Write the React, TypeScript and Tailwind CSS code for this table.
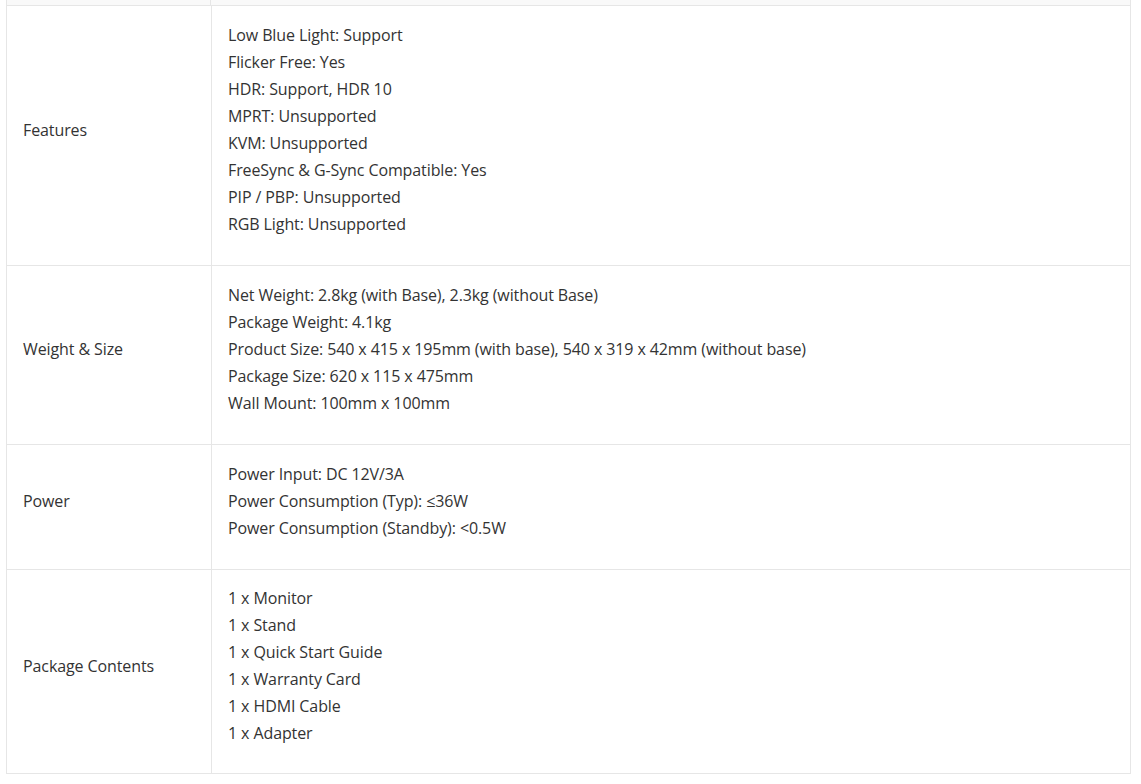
const rows: { label: string; items: string[] }[] = [
  {
    label: 'Features',
    items: [
      'Low Blue Light: Support',
      'Flicker Free: Yes',
      'HDR: Support, HDR 10',
      'MPRT: Unsupported',
      'KVM: Unsupported',
      'FreeSync & G-Sync Compatible: Yes',
      'PIP / PBP: Unsupported',
      'RGB Light: Unsupported',
    ],
  },
  {
    label: 'Weight & Size',
    items: [
      'Net Weight: 2.8kg (with Base), 2.3kg (without Base)',
      'Package Weight: 4.1kg',
      'Product Size: 540 x 415 x 195mm (with base), 540 x 319 x 42mm (without base)',
      'Package Size: 620 x 115 x 475mm',
      'Wall Mount: 100mm x 100mm',
    ],
  },
  {
    label: 'Power',
    items: [
      'Power Input: DC 12V/3A',
      'Power Consumption (Typ): ≤36W',
      'Power Consumption (Standby): <0.5W',
    ],
  },
  {
    label: 'Package Contents',
    items: [
      '1 x Monitor',
      '1 x Stand',
      '1 x Quick Start Guide',
      '1 x Warranty Card',
      '1 x HDMI Cable',
      '1 x Adapter',
    ],
  },
]

export default function App() {
  return (
    <div
      className="min-h-[784px] bg-white pl-[6px] text-[16px] leading-[27px] tracking-[-0.1px] text-[#333]"
      style={{ fontFamily: '"Open Sans", "Liberation Sans", sans-serif' }}
    >
      <div className="w-[1125px]">
        <div className="flex h-[5px] border-x border-[#e6e6e6] bg-[#f9f9f9]">
          <div className="w-[204px] border-r border-[#e6e6e6]" />
        </div>
        <table className="w-full border-collapse">
          <tbody>
            {rows.map((row, i) => {
              const last = i === rows.length - 1
              return (
                <tr key={row.label}>
                  <td
                    className={`w-[205px] border border-[#e6e6e6] pl-4 align-middle ${
                      last ? 'pt-[15px] pb-[26px]' : 'pt-4 pb-[27px]'
                    }`}
                  >
                    {row.label}
                  </td>
                  <td
                    className={`border border-[#e6e6e6] pl-4 align-top ${
                      last ? 'pt-[15px] pb-[26px]' : 'pt-4 pb-[27px]'
                    }`}
                  >
                    {row.items.map((item) => (
                      <div key={item}>{item}</div>
                    ))}
                  </td>
                </tr>
              )
            })}
          </tbody>
        </table>
      </div>
    </div>
  )
}
